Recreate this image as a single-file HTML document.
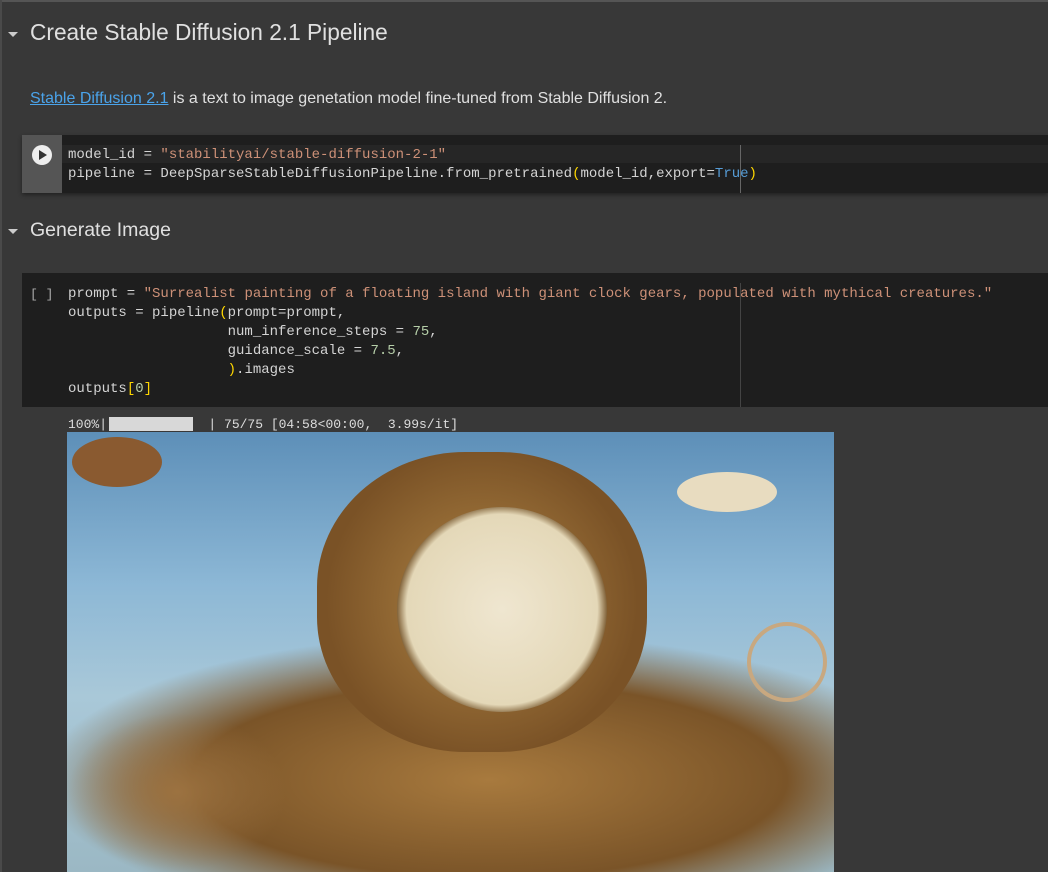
<!DOCTYPE html>
<html><head><style>
body{margin:0;width:1048px;height:872px;overflow:hidden;background:#383838;font-family:"Liberation Sans",sans-serif;position:relative}
.a{position:absolute}
.mono{font-family:"Liberation Mono",monospace;font-size:14px;line-height:19px;color:#d4d4d4;white-space:pre}
.s{color:#ce9178}.n{color:#b5cea8}.b{color:#ffd700}.k{color:#569cd6}
h2{margin:0;font-weight:400;font-size:22.7px;color:#e0e0e0}
.tri{width:0;height:0;border-left:5px solid transparent;border-right:5px solid transparent;border-top:5px solid #ccc}
</style></head><body>
<div class="a" style="left:0;top:0;width:1048px;height:2px;background:#555"></div>
<div class="a" style="left:0;top:0;width:2px;height:872px;background:#4a4a4a"></div>
<div class="a tri" style="left:8px;top:32px"></div>
<h2 class="a" style="left:30px;top:19px">Create Stable Diffusion 2.1 Pipeline</h2>
<div class="a" style="left:30px;top:90px;font-size:16px;color:#e0e0e0"><span style="color:#4aa3ea;text-decoration:underline">Stable Diffusion 2.1</span> is a text to image genetation model fine-tuned from Stable Diffusion 2.</div>
<div class="a" style="left:22px;top:135px;width:1026px;height:58px;background:#1e1e1e;box-shadow:0 2px 4px rgba(0,0,0,.4)"></div>
<div class="a" style="left:22px;top:135px;width:40px;height:58px;background:#555"></div>
<div class="a" style="left:62px;top:145px;width:986px;height:18px;background:#262626"></div>
<div class="a" style="left:32px;top:145px;width:20px;height:20px;border-radius:50%;background:#eee"></div>
<div class="a" style="left:39px;top:150px;width:0;height:0;border-top:5px solid transparent;border-bottom:5px solid transparent;border-left:8px solid #333"></div>
<div class="a" style="left:740px;top:145px;width:1px;height:48px;background:#666"></div>
<div class="a mono" style="left:68px;top:146px">model_id = <span class="s">"stabilityai/stable-diffusion-2-1"</span>
pipeline = DeepSparseStableDiffusionPipeline.from_pretrained<span class="b">(</span>model_id,export=<span class="k">True</span><span class="b">)</span></div>
<div class="a tri" style="left:8px;top:229px"></div>
<h2 class="a" style="left:30px;top:219px;font-size:19.5px">Generate Image</h2>
<div class="a" style="left:22px;top:273px;width:1026px;height:134px;background:#1e1e1e"></div>
<div class="a" style="left:740px;top:283px;width:1px;height:124px;background:#444"></div>
<div class="a mono" style="left:30px;top:285px;color:#aaa;font-size:13px">[ ]</div>
<div class="a mono" style="left:68px;top:285px">prompt = <span class="s">"Surrealist painting of a floating island with giant clock gears, populated with mythical creatures."</span>
outputs = pipeline<span class="b">(</span>prompt=prompt,
                   num_inference_steps = <span class="n">75</span>,
                   guidance_scale = <span class="n">7.5</span>,
                   <span class="b">)</span>.images
outputs<span class="b">[</span><span class="n">0</span><span class="b">]</span></div>
<div class="a mono" style="left:68px;top:415px;font-size:13px;color:#ddd">100%|             | 75/75 [04:58&lt;00:00,  3.99s/it]</div>
<div class="a" style="left:109px;top:417px;width:84px;height:14px;background:#d8d8d8"></div>
<div class="a" style="left:67px;top:432px;width:767px;height:440px;overflow:hidden;background:linear-gradient(180deg,#5d8fb8 0%,#8db8d6 35%,#a9c8d8 60%,#9bb8c4 100%)">
<div class="a" style="left:0;top:210px;width:767px;height:230px;background:radial-gradient(ellipse at 55% 60%,#a87a3e 0%,#7a5428 50%,rgba(90,70,50,0) 75%)"></div>
<div class="a" style="left:250px;top:20px;width:330px;height:300px;border-radius:45%;background:radial-gradient(circle,#b08545 0%,#7a5226 70%)"></div>
<div class="a" style="left:330px;top:75px;width:210px;height:205px;border-radius:50%;background:radial-gradient(circle,#efe6d0 0%,#e4d8b8 65%,#7a5a30 72%)"></div>
<div class="a" style="left:0;top:280px;width:220px;height:160px;background:radial-gradient(ellipse,#9c7240 0%,rgba(120,90,60,0) 70%)"></div>
<div class="a" style="left:680px;top:190px;width:80px;height:80px;border-radius:50%;border:4px solid #c8a880;box-sizing:border-box"></div>
<div class="a" style="left:610px;top:40px;width:100px;height:40px;border-radius:50%;background:#e8dcc0"></div>
<div class="a" style="left:5px;top:5px;width:90px;height:50px;border-radius:50%;background:#8a5a30"></div>
</div>
</body></html>
